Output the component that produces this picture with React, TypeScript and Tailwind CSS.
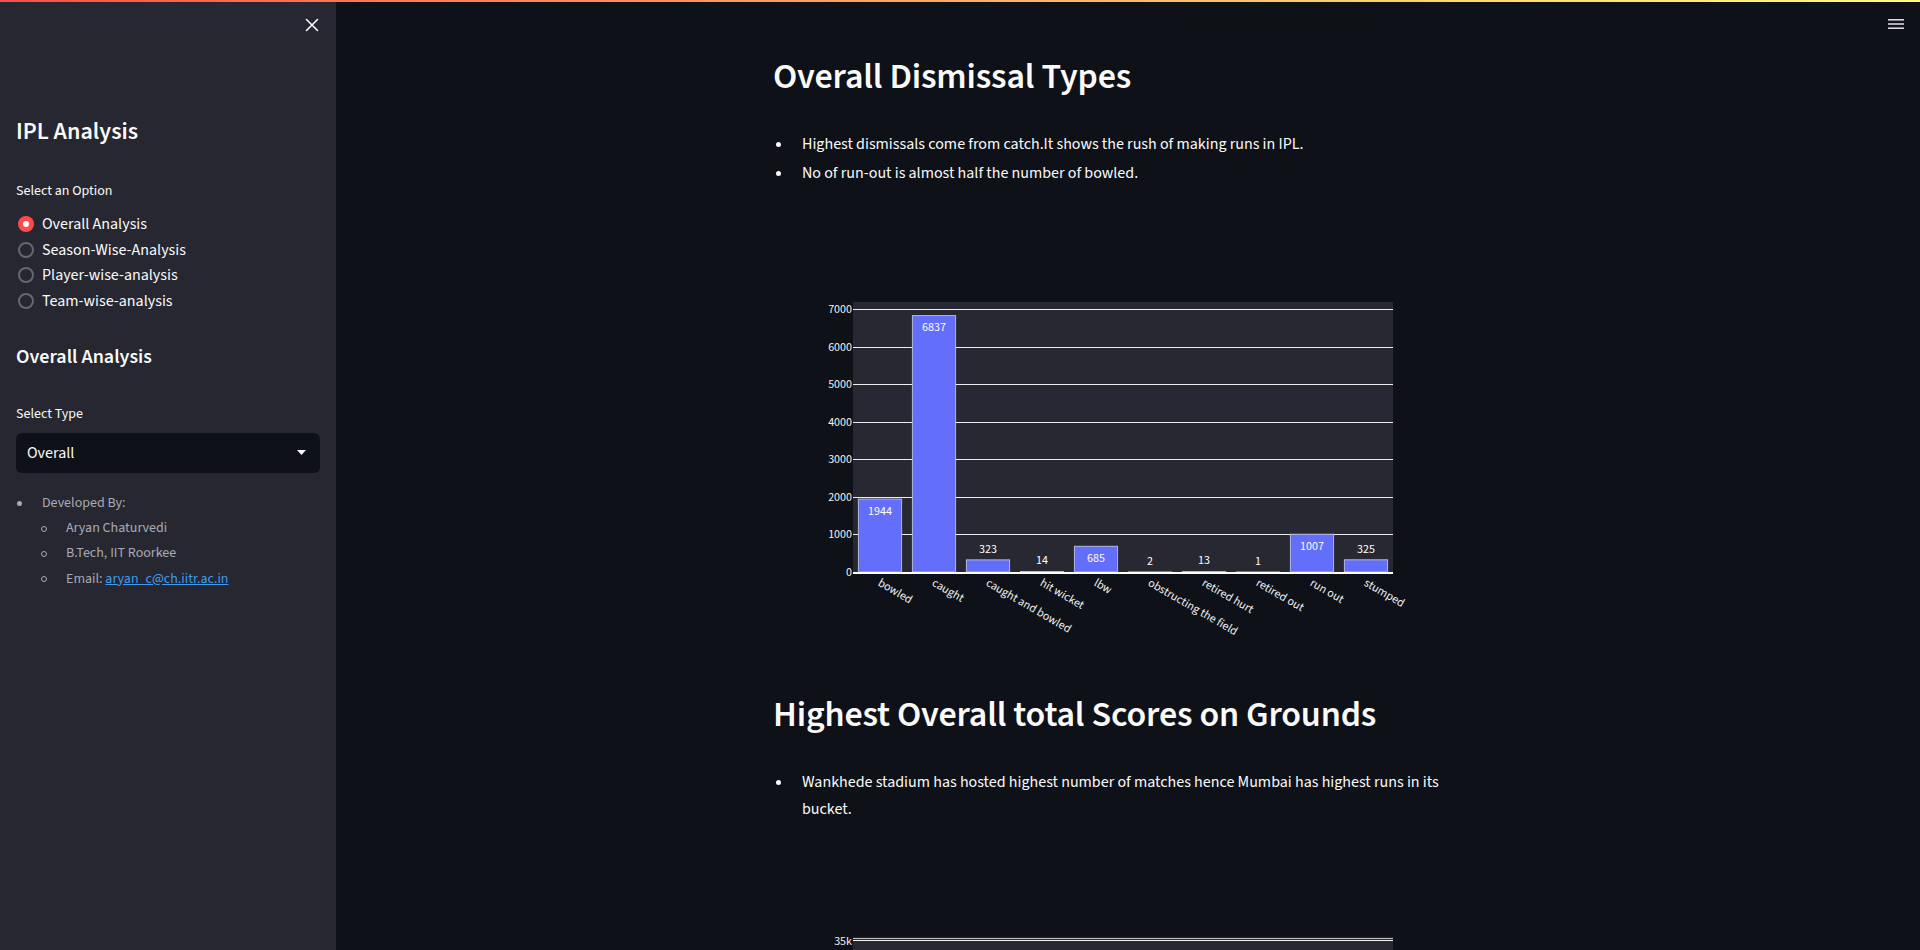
import React from "react";

const cats: [string, number][] = [
  ["bowled", 1944],
  ["caught", 6837],
  ["caught and bowled", 323],
  ["hit wicket", 14],
  ["lbw", 685],
  ["obstructing the field", 2],
  ["retired hurt", 13],
  ["retired out", 1],
  ["run out", 1007],
  ["stumped", 325],
];

const K = 0.0375;
const lineY = (v: number) => Math.round(370 - v * K - 0.5) + 0.5;

function DismissalChart() {
  const ticks = [0, 1000, 2000, 3000, 4000, 5000, 6000, 7000];
  return (
    <svg width={700} height={450} className="block shrink-0" fontSize={12}>
      <rect x={80} y={100} width={540} height={270} fill="#282832" />
      {ticks.slice(1).map((t) => (
        <line key={t} x1={80} x2={620} y1={lineY(t)} y2={lineY(t)} stroke="#ffffff" strokeOpacity={0.92} strokeWidth={1} />
      ))}
      {ticks.map((t) => (
        <text key={t} x={79} y={370 - t * K} textAnchor="end" dominantBaseline="central" fill="#f2f2f2">
          {t}
        </text>
      ))}
      {cats.map(([name, v], i) => {
        const h = v * K;
        const x = 80 + 54 * i + 5.4;
        const top = 370 - h;
        const cx = 80 + 54 * i + 27;
        const inside = h > 20;
        return (
          <g key={name}>
            <rect x={x} y={top} width={43.2} height={h} fill="#636efa" stroke="#b4b8e0" strokeWidth={1} />
            <text x={cx} y={inside ? top + 12 : top - 10.7} textAnchor="middle" dominantBaseline="central" fill="#ffffff">
              {v}
            </text>
            <text transform={`translate(${cx - 1} 380) rotate(30)`} dominantBaseline="central" fill="#f2f2f2">
              {name}
            </text>
          </g>
        );
      })}
      <line x1={80} x2={620} y1={371} y2={371} stroke="#ffffff" strokeWidth={2} />
    </svg>
  );
}

function GroundsChart() {
  return (
    <svg width={700} height={450} className="block shrink-0" fontSize={12}>
      <rect x={80} y={100} width={540} height={270} fill="#282832" />
      <line x1={80} x2={620} y1={101.5} y2={101.5} stroke="#ffffff" strokeOpacity={0.7} strokeWidth={1} />
      <line x1={80} x2={620} y1={103.5} y2={103.5} stroke="#ffffff" strokeOpacity={0.95} strokeWidth={1} />
      <text x={79} y={104} textAnchor="end" dominantBaseline="central" fill="#f2f2f2">
        35k
      </text>
    </svg>
  );
}

function Radio({ label, checked }: { label: string; checked?: boolean }) {
  return (
    <div className="flex h-[25.7px] items-center">
      <div className="ml-[2px] flex h-4 w-4 items-center justify-center">
        {checked ? (
          <div className="flex h-4 w-4 items-center justify-center rounded-full bg-[#ff4b4b]">
            <div className="h-[6px] w-[6px] rounded-full bg-white" />
          </div>
        ) : (
          <div className="h-4 w-4 rounded-full border-2 border-[#65666e]" />
        )}
      </div>
      <span className="ml-[8px] text-[16px] text-[#fafafa]">{label}</span>
    </div>
  );
}

export default function App() {
  return (
    <div className="relative flex h-[950px] w-full overflow-hidden bg-[#0e1117] font-['Source_Sans_3','Source_Sans_Pro',Lato,sans-serif] text-[#fafafa]">
      <div className="absolute left-0 right-0 top-0 z-10 h-[2px] bg-gradient-to-r from-[#ff4b4b] to-[#fffd80]" />

      {/* Sidebar */}
      <aside className="h-full w-[336px] shrink-0 bg-[#262730] px-4">
        <div className="flex h-[50px] items-center justify-end pr-[1px]">
          <svg width="14" height="14" viewBox="0 0 14 14">
            <path d="M1.5 1.5 L12.5 12.5 M12.5 1.5 L1.5 12.5" stroke="#fafafa" strokeWidth="1.6" strokeLinecap="round" />
          </svg>
        </div>
        <h1 className="mt-[67px] text-[24px] font-semibold leading-[29px]">IPL Analysis</h1>
        <div className="mt-[35px] text-[14px] leading-[20px]">Select an Option</div>
        <div className="mt-[10px] flex flex-col">
          <Radio label="Overall Analysis" checked />
          <Radio label="Season-Wise-Analysis" />
          <Radio label="Player-wise-analysis" />
          <Radio label="Team-wise-analysis" />
        </div>
        <h2 className="mt-[31px] text-[20px] font-semibold leading-[24px]">Overall Analysis</h2>
        <div className="mt-[35px] text-[14px] leading-[20px]">Select Type</div>
        <div className="mt-[9px] flex h-[40px] items-center justify-between rounded-[6px] bg-[#0e1117] pl-[11px] pr-[14px]">
          <span className="text-[16px]">Overall</span>
          <svg width="9" height="5" viewBox="0 0 9 5">
            <path d="M0 0 L9 0 L4.5 5 Z" fill="#fafafa" />
          </svg>
        </div>
        <ul className="mt-[18px] text-[14px] leading-[25.3px] text-[#a9abb3]">
          <li className="flex items-center">
            <span className="ml-[1px] h-[5px] w-[5px] rounded-full bg-[#a9abb3]" />
            <span className="ml-[20px]">Developed By:</span>
          </li>
          <li className="flex items-center pl-[25px]">
            <span className="h-[6px] w-[6px] rounded-full border border-[#a9abb3]" />
            <span className="ml-[19px]">Aryan Chaturvedi</span>
          </li>
          <li className="flex items-center pl-[25px]">
            <span className="h-[6px] w-[6px] rounded-full border border-[#a9abb3]" />
            <span className="ml-[19px]">B.Tech, IIT Roorkee</span>
          </li>
          <li className="flex items-center pl-[25px]">
            <span className="h-[6px] w-[6px] rounded-full border border-[#a9abb3]" />
            <span className="ml-[19px]">
              Email: <a className="text-[#3d9df3] underline">aryan_c@ch.iitr.ac.in</a>
            </span>
          </li>
        </ul>
      </aside>

      {/* Main */}
      <main className="relative h-full flex-1">
        <div className="absolute right-[16px] top-[19px]">
          <svg width="16" height="11" viewBox="0 0 16 11">
            <rect x="0" y="0" width="16" height="1.6" fill="#d8d8da" />
            <rect x="0" y="4.2" width="16" height="1.6" fill="#d8d8da" />
            <rect x="0" y="8.4" width="16" height="1.6" fill="#d8d8da" />
          </svg>
        </div>
        <div className="mx-auto flex w-[710px] flex-col pt-[55px]">
          <h2 className="text-[36px] font-semibold leading-[43px] tracking-[-0.005em]">Overall Dismissal Types</h2>
          <ul className="mt-[33px] flex flex-col gap-[2px] text-[16px] leading-[27px]">
            <li className="flex">
              <span className="mt-[11px] ml-[3px] h-[5px] w-[5px] shrink-0 rounded-full bg-[#fafafa]" />
              <span className="ml-[21px]">Highest dismissals come from catch.It shows the rush of making runs in IPL.</span>
            </li>
            <li className="flex">
              <span className="mt-[11px] ml-[3px] h-[5px] w-[5px] shrink-0 rounded-full bg-[#fafafa]" />
              <span className="ml-[21px]">No of run-out is almost half the number of bowled.</span>
            </li>
          </ul>
          <div className="mt-[14.5px]">
            <DismissalChart />
          </div>
          <h2 className="mt-[41px] text-[36px] font-semibold leading-[43px] tracking-[-0.005em]">
            Highest Overall total Scores on Grounds
          </h2>
          <ul className="mt-[33px] flex flex-col text-[16px] leading-[27px]">
            <li className="flex">
              <span className="mt-[11px] ml-[3px] h-[5px] w-[5px] shrink-0 rounded-full bg-[#fafafa]" />
              <span className="ml-[21px] w-[660px]">
                Wankhede stadium has hosted highest number of matches hence Mumbai has highest runs in its bucket.
              </span>
            </li>
          </ul>
          <div className="mt-[14.5px]">
            <GroundsChart />
          </div>
        </div>
      </main>
    </div>
  );
}
